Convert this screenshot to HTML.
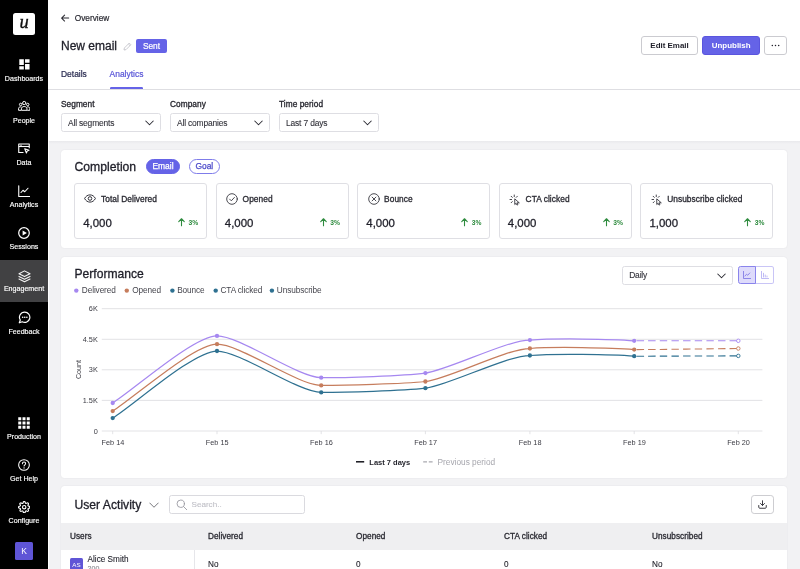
<!DOCTYPE html>
<html lang="en">
<head>
<meta charset="utf-8">
<title>New email – Analytics</title>
<style>
*{box-sizing:border-box;margin:0;padding:0}
html,body{width:800px;height:569px;overflow:hidden;background:#fff}
body{font-family:"Liberation Sans",sans-serif;color:#1f1f29;position:relative;font-size:9px}
.abs{position:absolute}
.t{position:absolute;white-space:nowrap;line-height:12px;font-size:8.2px;color:#26262e;-webkit-text-stroke:.1px currentColor}
.b{-webkit-text-stroke:.3px currentColor;letter-spacing:.05px}
/* sidebar */
#side{position:absolute;left:0;top:0;width:47.7px;height:569px;background:#000}
#side .lbl{position:absolute;left:0;width:48px;text-align:center;color:#fff;font-size:7.1px;line-height:10px;-webkit-text-stroke:.15px #fff}
#side svg{position:absolute}
#logo{position:absolute;left:13px;top:13.3px;width:22px;height:22px;background:#fff;border-radius:2.5px;color:#111;font-family:"Liberation Serif",serif;font-style:italic;font-size:18.5px;line-height:19px;text-align:center;-webkit-text-stroke:.35px #111}
#active{position:absolute;left:0;top:259.7px;width:48px;height:42.2px;background:#414143}
#sidestrip{position:absolute;left:46.6px;top:0;width:1.4px;height:569px;background:#1f1f1f}
#kav{position:absolute;left:15px;top:542px;width:18px;height:18px;background:#5f55d6;border-radius:1.5px;color:#fff;font-size:8.5px;line-height:18px;text-align:center}
/* header */
#hdrline{position:absolute;left:48px;top:89.3px;width:752px;height:1px;background:#dedee2}
#graybg{position:absolute;left:49.3px;top:141px;width:751px;height:428px;background:#f2f2f4}
#grayshadow{position:absolute;left:49.3px;top:141px;width:751px;height:3px;background:linear-gradient(#e9e9ec,#f2f2f4)}
.card{position:absolute;background:#fff;border-radius:3.5px;box-shadow:0 0 1.5px rgba(40,40,60,.10)}
.btn{position:absolute;border:1px solid #cbcbd0;border-radius:3px;background:#fff;font-weight:700;font-size:7.95px;line-height:17px;text-align:center;color:#1f1f29}
.sel{position:absolute;border:1px solid #dedee3;border-radius:2.5px;background:#fff;height:19px}
.sel span{-webkit-text-stroke:.1px currentColor;position:absolute;left:6px;top:2.7px;line-height:12px;font-size:8.45px;letter-spacing:-.17px;color:#33333b;white-space:nowrap}
.sel svg{position:absolute;right:6px;top:6.3px}
.pill{position:absolute;height:14.5px;border-radius:8px;-webkit-text-stroke:.25px currentColor;font-size:8.45px;line-height:13.5px;text-align:center}
.stat{position:absolute;top:183.3px;height:55.7px;border:1px solid #dfdfe4;border-radius:3px;background:#fff}
.stat .lab{position:absolute;left:25.8px;top:8.7px;font-size:8.35px;line-height:12px;color:#2a2a32;white-space:nowrap;-webkit-text-stroke:.3px #2a2a32;letter-spacing:.05px}
.stat .val{-webkit-text-stroke:.28px currentColor;position:absolute;left:8px;top:30.6px;font-size:11.45px;line-height:16px;color:#1f1f29}
.stat .pct{position:absolute;right:8px;top:32.9px;font-size:6.7px;line-height:12px;font-weight:700;color:#2e8b3e}
.stat svg{position:absolute}
</style>
</head>
<body>
<div id="root" style="position:absolute;left:0;top:0;width:800px;height:569px;will-change:transform">
<!-- SIDEBAR -->
<div id="side">
  <div id="logo">u</div>
  <div id="active"></div>
  <div class="lbl" style="top:73.8px">Dashboards</div>
  <div class="lbl" style="top:115.5px">People</div>
  <div class="lbl" style="top:157.7px">Data</div>
  <div class="lbl" style="top:199.9px">Analytics</div>
  <div class="lbl" style="top:242.2px">Sessions</div>
  <div class="lbl" style="top:284.4px">Engagement</div>
  <div class="lbl" style="top:326.6px">Feedback</div>
  <div class="lbl" style="top:431.5px">Production</div>
  <div class="lbl" style="top:473.7px">Get Help</div>
  <div class="lbl" style="top:515.5px">Configure</div>

  <svg style="left:17.7px;top:58.3px" width="12.6" height="12.6" viewBox="0 0 24 24" fill="#fff"><path d="M2.5 13.2h8.6V2.5H2.5zM2.5 22h8.6v-6.4H2.5zM13.4 22H22V11.3h-8.6zM13.4 2.500v6.4H22V2.5z"/></svg>
  <svg style="left:17.8px;top:100.3px" width="12.4" height="11.6" viewBox="0 0 26 24" fill="none" stroke="#fff" stroke-width="2.07"><circle cx="13" cy="6.2" r="3.4"/><circle cx="5.6" cy="9.2" r="2.6"/><circle cx="20.4" cy="9.2" r="2.6"/><path d="M7.200 21.500v-3.200c0-3 2.400-4.800 5.800-4.800s5.800 1.800 5.800 4.800v3.200z"/><path d="M7 14.500c-.5-.2-1-.3-1.600-.3-2.600 0-4.200 1.500-4.200 3.800v3.500h5.500M19 14.500c.5-.2 1-.3 1.600-.3 2.600 0 4.200 1.500 4.200 3.800v3.500h-5.500"/></svg>
  <svg style="left:18px;top:143.200px" width="12" height="11" viewBox="0 0 24 22" fill="none" stroke="#fff" stroke-width="2.20" stroke-linejoin="round"><path d="M11 19H1.500V2H22.500V10.500"/><path d="M1.500 7H22.500"/><path d="M4.500 4.500h3" stroke-width="1.83"/><path d="M13.500 11.500l8.500 3.200-3.600 1.500-1.600 3.800z"/></svg>
  <svg style="left:17.700px;top:184.800px" width="12.500" height="12.500" viewBox="0 0 25 25" fill="none" stroke="#fff" stroke-width="2.20" stroke-linecap="round" stroke-linejoin="round"><path d="M1.500 1.500V23H23.500"/><path d="M6 15l4-4.500 3.500 3 6.500-7"/></svg>
  <svg style="left:18px;top:227px" width="12" height="12" viewBox="0 0 24 24"><circle cx="12" cy="12" r="10.600" fill="none" stroke="#fff" stroke-width="2.44"/><path d="M9.200 6.800v10.400L17.800 12z" fill="#fff"/></svg>
  <svg style="left:17.500px;top:269.800px" width="13" height="12.800" viewBox="0 0 26 26" fill="none" stroke="#f4f4f4" stroke-width="2.20" stroke-linejoin="round" stroke-linecap="round"><path d="M13 1.800L24.200 7.600 13 13.400 1.800 7.600z"/><path d="M1.800 13L13 18.800 24.200 13"/><path d="M1.800 18.200L13 24 24.200 18.200"/></svg>
  <svg style="left:17.500px;top:311.200px" width="13" height="13" viewBox="0 0 26 26" fill="none" stroke="#fff" stroke-width="2.32" stroke-linejoin="round" stroke-linecap="round"><path d="M13.500 2.200a10.300 10.300 0 1 1-4.900 19.400L2.600 23.600l2-5.500A10.300 10.300 0 0 1 13.500 2.200z"/><path d="M9.300 12.500h.1M13.500 12.500h.1M17.700 12.500h.1" stroke-width="3.17"/></svg>
  <svg style="left:18px;top:417px" width="12" height="12" viewBox="0 0 24 24" fill="#fff"><rect x="0.500" y="0.500" width="6" height="6"/><rect x="9" y="0.500" width="6" height="6"/><rect x="17.500" y="0.500" width="6" height="6"/><rect x="0.500" y="9" width="6" height="6"/><rect x="9" y="9" width="6" height="6"/><rect x="17.500" y="9" width="6" height="6"/><rect x="0.500" y="17.500" width="6" height="6"/><rect x="9" y="17.500" width="6" height="6"/><rect x="17.500" y="17.500" width="6" height="6"/></svg>
  <svg style="left:18px;top:459px" width="12" height="12" viewBox="0 0 24 24" fill="none" stroke="#fff" stroke-width="2.07" stroke-linecap="round"><circle cx="12" cy="12" r="10.700"/><path d="M8.800 9.300c0-1.900 1.400-3.100 3.300-3.100s3.200 1.200 3.200 2.900c0 2.400-3.200 2.600-3.200 5.100"/><path d="M12.100 17.700v.2" stroke-width="2.68"/></svg>
  <svg style="left:17.800px;top:500.600px" width="12.400" height="12.400" viewBox="0 0 24 24" fill="none" stroke="#fff" stroke-width="2.20" stroke-linejoin="round"><circle cx="12" cy="12" r="3.300"/><path d="M19.400 15a1.650 1.650 0 0 0 .33 1.820l.06.060a2 2 0 1 1-2.830 2.830l-.06-.06a1.650 1.650 0 0 0-1.820-.33 1.650 1.650 0 0 0-1 1.510V21a2 2 0 0 1-4 0v-.09A1.650 1.650 0 0 0 9 19.400a1.650 1.650 0 0 0-1.820.33l-.06.060a2 2 0 1 1-2.830-2.830l.06-.06a1.650 1.650 0 0 0 .33-1.820 1.650 1.650 0 0 0-1.510-1H3a2 2 0 0 1 0-4h.09A1.650 1.650 0 0 0 4.600 9a1.650 1.650 0 0 0-.33-1.820l-.06-.06a2 2 0 1 1 2.830-2.830l.06.060a1.650 1.650 0 0 0 1.820.33H9a1.650 1.650 0 0 0 1-1.510V3a2 2 0 0 1 4 0v.09a1.650 1.650 0 0 0 1 1.510 1.650 1.650 0 0 0 1.820-.33l.06-.06a2 2 0 1 1 2.830 2.830l-.06.060a1.650 1.650 0 0 0-.33 1.820V9a1.650 1.650 0 0 0 1.510 1H21a2 2 0 0 1 0 4h-.09a1.650 1.650 0 0 0-1.510 1z"/></svg>
  <div id="kav">K</div>
</div>

<!-- HEADER -->
<div class="t" style="left:74.7px;top:12.1px;font-size:8.3px;color:#2a2a32;-webkit-text-stroke:.2px #2a2a32">Overview</div>
<div class="t" style="left:61px;top:38px;font-size:12px;line-height:17px;color:#1f1f29;-webkit-text-stroke:.3px #1f1f29">New email</div>
<div class="abs" style="left:136px;top:38.8px;width:31px;height:14.4px;background:#6563e7;border-radius:2px;color:#fff;font-size:8.3px;line-height:14.4px;text-align:center;-webkit-text-stroke:.2px #fff;letter-spacing:-.05px">Sent</div>
<div class="t" style="left:61px;top:68px;font-size:8.45px;color:#2b2d52;-webkit-text-stroke:.22px #2b2d52">Details</div>
<div class="t" style="left:109.6px;top:68px;font-size:8.45px;color:#5b57d8;-webkit-text-stroke:.22px #5b57d8">Analytics</div>
<div class="abs" style="left:109.6px;top:87.2px;width:33.8px;height:2.4px;background:#6563e7;border-radius:1.2px"></div>

<svg class="abs" style="left:61.4px;top:14.3px" width="8.2" height="8.2" viewBox="0 0 16 16" fill="none" stroke="#2a2a32" stroke-width="2" stroke-linecap="round" stroke-linejoin="round"><path d="M15 8H1.500M7 2.200L1.200 8 7 13.800"/></svg>
<svg class="abs" style="left:123px;top:41.500px" width="9" height="9" viewBox="0 0 18 18" fill="none" stroke="#b9b9c2" stroke-width="1.500" stroke-linejoin="round"><path d="M12.500 2.200l3.300 3.300L6 15.300l-4 .7.700-4z"/><path d="M10.800 4l3.200 3.200"/></svg>
<div id="hdrline"></div>
<div class="btn" style="left:641.3px;top:36.1px;width:56.5px;height:19px">Edit Email</div>
<div class="btn" style="left:702.2px;top:36.1px;width:58px;height:19px;background:#6563e7;border-color:#5a55de;color:#fff">Unpublish</div>
<div class="btn" style="left:764.3px;top:36.1px;width:22.5px;height:19px"></div>
<svg class="abs" style="left:771.3px;top:44.3px" width="9" height="3" viewBox="0 0 18 6" fill="#1f1f29"><circle cx="2.6" cy="3" r="1.5"/><circle cx="9" cy="3" r="1.5"/><circle cx="15.4" cy="3" r="1.5"/></svg>

<!-- FILTERS -->
<div class="t b" style="left:61px;top:98.1px;font-size:8.3px">Segment</div>
<div class="t b" style="left:170px;top:98.1px;font-size:8.3px">Company</div>
<div class="t b" style="left:279px;top:98.1px;font-size:8.3px">Time period</div>
<div class="sel" style="left:61px;top:113.2px;width:100px"><span>All segments</span><svg width="9" height="6" viewBox="0 0 18 12" fill="none" stroke="#2a2a32" stroke-width="2.05" stroke-linecap="round" stroke-linejoin="round"><path d="M1.500 2l7.500 7.500L16.500 2"/></svg></div>
<div class="sel" style="left:170px;top:113.2px;width:100px"><span>All companies</span><svg width="9" height="6" viewBox="0 0 18 12" fill="none" stroke="#2a2a32" stroke-width="2.05" stroke-linecap="round" stroke-linejoin="round"><path d="M1.500 2l7.500 7.500L16.500 2"/></svg></div>
<div class="sel" style="left:279px;top:113.2px;width:100px"><span>Last 7 days</span><svg width="9" height="6" viewBox="0 0 18 12" fill="none" stroke="#2a2a32" stroke-width="2.05" stroke-linecap="round" stroke-linejoin="round"><path d="M1.500 2l7.500 7.500L16.500 2"/></svg></div>

<div id="graybg"></div><div id="grayshadow"></div>

<!-- COMPLETION CARD -->
<div class="card" style="left:61px;top:149.8px;width:726px;height:98px"></div>
<div class="t" style="left:74.5px;top:157.9px;font-size:12.2px;line-height:18px;color:#1f1f29;-webkit-text-stroke:.3px #1f1f29">Completion</div>
<div class="pill" style="left:145.8px;top:159.3px;width:34.4px;background:#6563e7;color:#fff;border:1px solid #6563e7">Email</div>
<div class="pill" style="left:188.8px;top:159.3px;width:31px;background:#fff;color:#4b49c9;border:1px solid #7f7cea">Goal</div>

<div class="stat" style="left:74.2px;width:133.1px"><svg style="left:8.9px;top:9.9px" width="12" height="9" viewBox="0 0 24 18" fill="none" stroke="#33333b" stroke-width="2" stroke-linejoin="round"><path d="M1.200 9C3.500 4.500 7.400 1.800 12 1.800S20.500 4.500 22.800 9C20.500 13.500 16.600 16.200 12 16.200S3.500 13.500 1.200 9z"/><circle cx="12" cy="9" r="3.600"/></svg><div class="lab">Total Delivered</div><svg style="right:21.4px;top:34.2px" width="7" height="8.500" viewBox="0 0 14 17" fill="none" stroke="#2e8b3e" stroke-width="2.200" stroke-linecap="round" stroke-linejoin="round"><path d="M7 15.500V2M1.500 7.200L7 1.500l5.500 5.700"/></svg><div class="val">4,000</div><div class="pct">3%</div></div>
<div class="stat" style="left:215.8px;width:133.1px"><svg style="left:9.3px;top:8.7px" width="12" height="12" viewBox="0 0 24 24" fill="none" stroke="#33333b" stroke-width="1.75" stroke-linecap="round" stroke-linejoin="round"><circle cx="12" cy="12" r="10.600"/><path d="M7.300 12.300l3.300 3.300 6.200-6.700"/></svg><div class="lab">Opened</div><svg style="right:21.4px;top:34.2px" width="7" height="8.500" viewBox="0 0 14 17" fill="none" stroke="#2e8b3e" stroke-width="2.200" stroke-linecap="round" stroke-linejoin="round"><path d="M7 15.500V2M1.500 7.200L7 1.500l5.500 5.700"/></svg><div class="val">4,000</div><div class="pct">3%</div></div>
<div class="stat" style="left:357.3px;width:133.1px"><svg style="left:9.3px;top:8.7px" width="12" height="12" viewBox="0 0 24 24" fill="none" stroke="#33333b" stroke-width="1.75" stroke-linecap="round" stroke-linejoin="round"><circle cx="12" cy="12" r="10.600"/><path d="M8.200 8.200l7.600 7.600M15.800 8.200l-7.600 7.600"/></svg><div class="lab">Bounce</div><svg style="right:21.4px;top:34.2px" width="7" height="8.500" viewBox="0 0 14 17" fill="none" stroke="#2e8b3e" stroke-width="2.200" stroke-linecap="round" stroke-linejoin="round"><path d="M7 15.500V2M1.500 7.200L7 1.500l5.500 5.700"/></svg><div class="val">4,000</div><div class="pct">3%</div></div>
<div class="stat" style="left:498.8px;width:133.1px"><svg style="left:9.500px;top:9.800px" width="12" height="12" viewBox="0 0 24 24" fill="none" stroke="#33333b" stroke-width="1.8" stroke-linecap="round" stroke-linejoin="round"><path d="M11.500 10.500v10.500l2.700-2.400 1.800 3.600 1.800-.9-1.800-3.600h3.800z"/><path d="M10.500 2v3.300M4.300 4.500l2.300 2.300M2 11h3.300M4.300 17.500l2.300-2.300M16.700 4.500l-2.300 2.300"/></svg><div class="lab">CTA clicked</div><svg style="right:21.4px;top:34.2px" width="7" height="8.500" viewBox="0 0 14 17" fill="none" stroke="#2e8b3e" stroke-width="2.200" stroke-linecap="round" stroke-linejoin="round"><path d="M7 15.500V2M1.500 7.200L7 1.500l5.500 5.700"/></svg><div class="val">4,000</div><div class="pct">3%</div></div>
<div class="stat" style="left:640.4px;width:133.1px"><svg style="left:9.500px;top:9.800px" width="12" height="12" viewBox="0 0 24 24" fill="none" stroke="#33333b" stroke-width="1.8" stroke-linecap="round" stroke-linejoin="round"><path d="M11.500 10.500v10.500l2.700-2.400 1.800 3.600 1.800-.9-1.800-3.600h3.800z"/><path d="M10.500 2v3.300M4.300 4.500l2.300 2.300M2 11h3.300M4.300 17.500l2.300-2.300M16.700 4.500l-2.300 2.300"/></svg><div class="lab">Unsubscribe clicked</div><svg style="right:21.4px;top:34.2px" width="7" height="8.500" viewBox="0 0 14 17" fill="none" stroke="#2e8b3e" stroke-width="2.200" stroke-linecap="round" stroke-linejoin="round"><path d="M7 15.500V2M1.500 7.200L7 1.500l5.500 5.700"/></svg><div class="val">1,000</div><div class="pct">3%</div></div>

<!-- PERFORMANCE CARD -->
<div class="card" style="left:61px;top:257px;width:726px;height:220.5px"></div>
<div class="t" style="left:74.5px;top:264.5px;font-size:12.1px;line-height:18px;color:#1f1f29;-webkit-text-stroke:.3px #1f1f29">Performance</div>


<svg class="abs" style="left:0;top:0" width="800" height="569" viewBox="0 0 800 569" font-family="Liberation Sans, sans-serif" font-size="7.300" fill="#3c3c44">
<path d="M101.8 308.7 H762.400" stroke="#dfdfe2" stroke-width="0.9"/>
<text x="97.800" y="311.3" text-anchor="end">6K</text>
<path d="M101.8 339.3 H762.400" stroke="#dfdfe2" stroke-width="0.9"/>
<text x="97.800" y="341.9" text-anchor="end">4.5K</text>
<path d="M101.8 369.8 H762.400" stroke="#dfdfe2" stroke-width="0.9"/>
<text x="97.800" y="372.4" text-anchor="end">3K</text>
<path d="M101.8 400.4 H762.400" stroke="#dfdfe2" stroke-width="0.9"/>
<text x="97.800" y="403.0" text-anchor="end">1.5K</text>
<path d="M101.8 431.0 H762.400" stroke="#dcdce0" stroke-width="0.800"/>
<text x="97.800" y="433.6" text-anchor="end">0</text>
<path d="M112.7 431v3.200" stroke="#dcdce0" stroke-width="0.800"/>
<text x="112.9" y="444.800" text-anchor="middle">Feb 14</text>
<path d="M217.0 431v3.200" stroke="#dcdce0" stroke-width="0.800"/>
<text x="217.2" y="444.800" text-anchor="middle">Feb 15</text>
<path d="M321.2 431v3.200" stroke="#dcdce0" stroke-width="0.800"/>
<text x="321.4" y="444.800" text-anchor="middle">Feb 16</text>
<path d="M425.4 431v3.200" stroke="#dcdce0" stroke-width="0.800"/>
<text x="425.6" y="444.800" text-anchor="middle">Feb 17</text>
<path d="M529.9 431v3.200" stroke="#dcdce0" stroke-width="0.800"/>
<text x="530.1" y="444.800" text-anchor="middle">Feb 18</text>
<path d="M634.2 431v3.200" stroke="#dcdce0" stroke-width="0.800"/>
<text x="634.4" y="444.800" text-anchor="middle">Feb 19</text>
<path d="M738.3 431v3.200" stroke="#dcdce0" stroke-width="0.800"/>
<text x="738.5" y="444.800" text-anchor="middle">Feb 20</text>

<text transform="translate(81.200 369.500) rotate(-90)" text-anchor="middle" font-size="7.200">Count</text>
<path d="M112.7 403.0C135.6 388.2 194.1 335.9 217.0 335.9C239.9 335.9 298.3 377.7 321.2 377.7C344.1 377.7 402.5 376.1 425.4 373.1C448.4 370.0 506.9 340.1 529.9 340.1C552.8 338.2 611.3 338.9 634.2 340.8" fill="none" stroke="#a688f0" stroke-width="1.25"/>
<path d="M634.2 340.8C657.1 340.8 715.4 340.8 738.3 340.8" fill="none" stroke="#a688f0" stroke-width="1.1" stroke-dasharray="7.4 4.2" stroke-dashoffset="-2.5"/>
<circle cx="112.7" cy="403.0" r="2.15" fill="#a688f0"/>
<circle cx="217.0" cy="335.9" r="2.15" fill="#a688f0"/>
<circle cx="321.2" cy="377.7" r="2.15" fill="#a688f0"/>
<circle cx="425.4" cy="373.1" r="2.15" fill="#a688f0"/>
<circle cx="529.9" cy="340.1" r="2.15" fill="#a688f0"/>
<circle cx="634.2" cy="340.8" r="2.15" fill="#a688f0"/>
<circle cx="738.3" cy="340.8" r="1.75" fill="#fff" stroke="#a688f0" stroke-width="0.9"/>
<path d="M112.7 411.1C135.6 396.4 194.1 344.2 217.0 344.2C239.9 344.2 298.3 385.4 321.2 385.4C344.1 385.4 402.5 384.0 425.4 381.5C448.4 378.9 506.9 348.5 529.9 348.5C552.8 346.6 611.3 347.7 634.2 349.6" fill="none" stroke="#c67d5d" stroke-width="1.25"/>
<path d="M634.2 349.6C657.1 349.6 715.4 348.7 738.3 348.5" fill="none" stroke="#c67d5d" stroke-width="1.1" stroke-dasharray="7.4 4.2" stroke-dashoffset="-2.5"/>
<circle cx="112.7" cy="411.1" r="2.15" fill="#c67d5d"/>
<circle cx="217.0" cy="344.2" r="2.15" fill="#c67d5d"/>
<circle cx="321.2" cy="385.4" r="2.15" fill="#c67d5d"/>
<circle cx="425.4" cy="381.5" r="2.15" fill="#c67d5d"/>
<circle cx="529.9" cy="348.5" r="2.15" fill="#c67d5d"/>
<circle cx="634.2" cy="349.6" r="2.15" fill="#c67d5d"/>
<circle cx="738.3" cy="348.5" r="1.75" fill="#fff" stroke="#c67d5d" stroke-width="0.9"/>
<path d="M112.7 418.1C135.6 403.3 194.1 351.0 217.0 351.0C239.9 351.0 298.3 392.4 321.2 392.4C344.1 392.4 402.5 390.9 425.4 388.2C448.4 385.4 506.9 355.5 529.9 355.5C552.8 353.6 611.3 354.3 634.2 356.2" fill="none" stroke="#2f7191" stroke-width="1.25"/>
<path d="M634.2 356.2C657.1 356.2 715.4 355.9 738.3 355.9" fill="none" stroke="#2f7191" stroke-width="1.1" stroke-dasharray="7.4 4.2" stroke-dashoffset="-2.5"/>
<circle cx="112.7" cy="418.1" r="2.15" fill="#2f7191"/>
<circle cx="217.0" cy="351.0" r="2.15" fill="#2f7191"/>
<circle cx="321.2" cy="392.4" r="2.15" fill="#2f7191"/>
<circle cx="425.4" cy="388.2" r="2.15" fill="#2f7191"/>
<circle cx="529.9" cy="355.5" r="2.15" fill="#2f7191"/>
<circle cx="634.2" cy="356.2" r="2.15" fill="#2f7191"/>
<circle cx="738.3" cy="355.9" r="1.75" fill="#fff" stroke="#2f7191" stroke-width="0.9"/>
<!-- legend top -->
<g font-size="8.25" letter-spacing="-.1" fill="#45454d">
<circle cx="76.300" cy="290.600" r="2.2" fill="#a688f0"/><text x="81.800" y="293.2">Delivered</text>
<circle cx="126.800" cy="290.600" r="2.2" fill="#c67d5d"/><text x="132.200" y="293.2">Opened</text>
<circle cx="172.400" cy="290.600" r="2.2" fill="#2f7191"/><text x="177.200" y="293.2">Bounce</text>
<circle cx="215.700" cy="290.600" r="2.2" fill="#2f7191"/><text x="220.500" y="293.2">CTA clicked</text>
<circle cx="271.900" cy="290.600" r="2.2" fill="#2f7191"/><text x="276.800" y="293.2">Unsubscribe</text>
</g>
<!-- legend bottom -->
<path d="M356 461.800h8.200" stroke="#15151c" stroke-width="1.500"/>
<text x="369.300" y="464.900" font-size="7.5" font-weight="700" fill="#26262e">Last 7 days</text>
<path d="M423.200 461.800h3.800M428.800 461.800h3.800" stroke="#a9a9b0" stroke-width="1.200"/>
<text x="437.500" y="464.900" font-size="8.3" fill="#a6a6ad">Previous period</text>
</svg>

<div class="sel" style="left:622.200px;top:265.500px;width:111.300px"><span>Daily</span><svg width="9" height="6" viewBox="0 0 18 12" fill="none" stroke="#2a2a32" stroke-width="2.05" stroke-linecap="round" stroke-linejoin="round"><path d="M1.500 2l7.500 7.500L16.500 2"/></svg></div>
<div class="abs" style="left:755.300px;top:266.200px;width:18.400px;height:17.600px;border:1px solid #c9c5f6;border-left:none;border-radius:0 2.500px 2.500px 0;background:#fff"></div>
<div class="abs" style="left:737.500px;top:266.200px;width:18.400px;height:17.600px;border:1px solid #8a84ec;border-radius:2.500px 0 0 2.500px;background:#dedbfb"></div>
<svg class="abs" style="left:742.700px;top:271px" width="8" height="8" viewBox="0 0 16 16" fill="none" stroke="#6a63e0" stroke-width="1.400" stroke-linecap="round" stroke-linejoin="round"><path d="M1 .8V15h14.200"/><path d="M4 10l3-3.500 2.500 2L13.500 4"/></svg>
<svg class="abs" style="left:760.500px;top:271px" width="8" height="8" viewBox="0 0 16 16" fill="none" stroke="#a39ef0" stroke-width="1.400" stroke-linecap="round" stroke-linejoin="round"><path d="M1 .8V15h14.200"/><path d="M5 12V4.500M8.500 12V8M12 12v-2"/></svg>

<!-- USER ACTIVITY CARD -->
<div class="card" style="left:61px;top:485.8px;width:726px;height:90px"></div>
<div class="t" style="left:74.5px;top:496px;font-size:12.15px;line-height:18px;color:#1f1f29;-webkit-text-stroke:.3px #1f1f29">User Activity</div>


<svg class="abs" style="left:148.500px;top:502.300px" width="10" height="6.500" viewBox="0 0 20 13" fill="none" stroke="#55555d" stroke-width="1.600" stroke-linecap="round" stroke-linejoin="round"><path d="M1.500 2l8.500 8.500L18.500 2"/></svg>
<div class="abs" style="left:168.800px;top:495px;width:136px;height:19px;border:1px solid #dadadf;border-radius:2.500px;background:#fff"></div>
<svg class="abs" style="left:176.2px;top:498.6px" width="11.6" height="11.6" viewBox="0 0 22 22" fill="none" stroke="#9a9aa2" stroke-width="1.700" stroke-linecap="round"><circle cx="9" cy="9" r="7"/><path d="M14.200 14.200l6.300 6.300"/></svg>
<div class="t" style="left:191.500px;top:499.3px;color:#bfbfc6;font-size:8.1px">Search..</div>
<div class="abs" style="left:751.2px;top:495px;width:22.4px;height:19px;border:1px solid #cdcdd1;border-radius:3.2px;background:#fff"></div>
<svg class="abs" style="left:757.800px;top:500px" width="9" height="9" viewBox="0 0 18 18" fill="none" stroke="#26262e" stroke-width="1.800" stroke-linecap="round" stroke-linejoin="round"><path d="M9 1.500v9M5 7l4 4 4-4"/><path d="M1.500 11v3.500c0 1 .8 2 2 2h11c1.200 0 2-1 2-2V11"/></svg>
<div class="abs" style="left:61px;top:523px;width:726px;height:27px;background:#efeff1"></div>
<div class="t b" style="left:70px;top:531.3px;font-size:8.2px;color:#2a2a32">Users</div>
<div class="t b" style="left:208px;top:531.3px;font-size:8.2px;color:#2a2a32">Delivered</div>
<div class="t b" style="left:356px;top:531.3px;font-size:8.2px;color:#2a2a32">Opened</div>
<div class="t b" style="left:504px;top:531.3px;font-size:8.2px;color:#2a2a32">CTA clicked</div>
<div class="t b" style="left:652px;top:531.3px;font-size:8.2px;color:#2a2a32">Unsubscribed</div>
<div class="abs" style="left:194px;top:550px;width:1px;height:19px;background:#e6e6ea"></div>
<div class="abs" style="left:70px;top:557.600px;width:13px;height:13px;background:#5f55d6;border-radius:1.500px;color:#fff;font-size:6.200px;line-height:13.500px;text-align:center">AS</div>
<div class="t" style="left:87.600px;top:553.6px;font-size:8.2px;color:#1f1f29">Alice Smith</div>
<div class="t" style="left:87.600px;top:563px;font-size:7px;color:#8a8a92">200</div>
<div class="t" style="left:208px;top:558.8px;font-size:8.2px">No</div>
<div class="t" style="left:356px;top:558.8px;font-size:8.2px">0</div>
<div class="t" style="left:504px;top:558.8px;font-size:8.2px">0</div>
<div class="t" style="left:652px;top:558.8px;font-size:8.2px">No</div>
</div>
</body>
</html>
